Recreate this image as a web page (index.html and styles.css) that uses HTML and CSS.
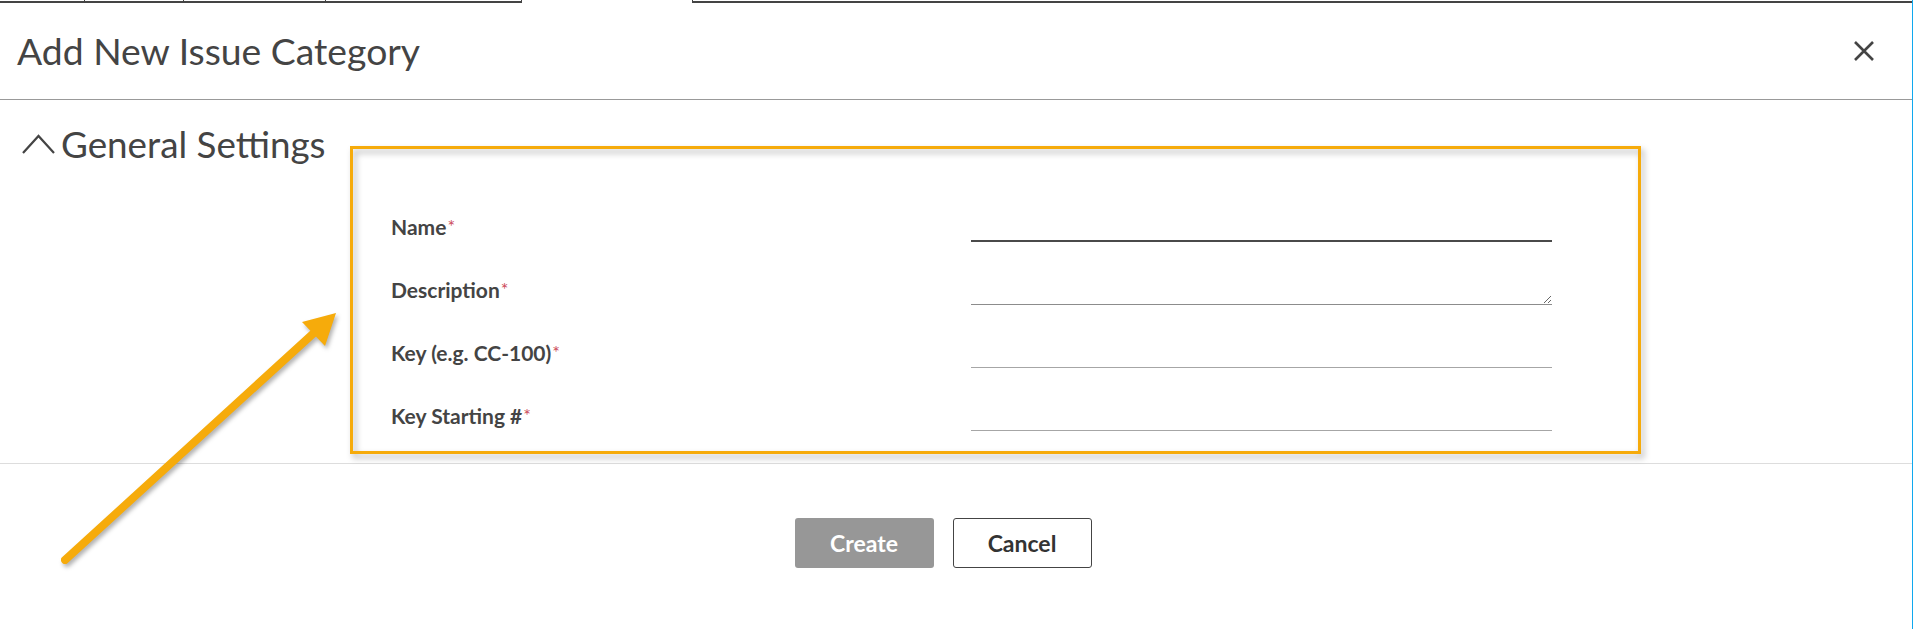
FILE: index.html
```html
<!DOCTYPE html>
<html lang="en">
<head>
<meta charset="utf-8">
<title>Add New Issue Category</title>
<link rel="stylesheet" href="styles.css">
</head>
<body>
<div class="page">
  <div class="topstrip">
    <div class="cell c1"></div>
    <div class="cell c2"></div>
    <div class="cell c3"></div>
    <div class="cell c4"></div>
    <div class="gap"></div>
    <div class="cell rest"></div>
  </div>

  <header class="header">
    <h1 class="title">Add New Issue Category</h1>
    <button class="close" aria-label="Close">
      <svg viewBox="0 0 22 22" width="22" height="22"><path d="M2 2 L20 20 M20 2 L2 20" stroke="#444" stroke-width="2.6" fill="none"/></svg>
    </button>
  </header>

  <main class="body">
    <div class="section-head">
      <svg class="chev" viewBox="0 0 33 20" width="33" height="20"><polyline points="1,19 16.5,2 32,19" fill="none" stroke="#444" stroke-width="2.2"/></svg>
      <span>General Settings</span>
    </div>
    <form class="form">
      <label class="lbl">Name<span class="req">*</span></label>
      <input class="field focused" type="text">
      <label class="lbl">Description<span class="req">*</span></label>
      <textarea class="field area"></textarea>
      <label class="lbl">Key (e.g. CC-100)<span class="req">*</span></label>
      <input class="field" type="text">
      <label class="lbl">Key Starting #<span class="req">*</span></label>
      <input class="field" type="text">
    </form>
  </main>

  <footer class="footer">
    <button class="btn primary">Create</button>
    <button class="btn secondary">Cancel</button>
  </footer>

  <div class="highlight"></div>
  <svg class="arrow" viewBox="0 0 320 300" width="320" height="300">
    <path d="M25 270 L276 41" stroke="#f6ab0b" stroke-width="8" stroke-linecap="round" fill="none"/>
    <polygon points="296,23 262,32 285,56" fill="#f6ab0b"/>
  </svg>
</div>
</body>
</html>
```
FILE: styles.css
```css
* { box-sizing: border-box; }
html, body { margin: 0; padding: 0; }
body {
  width: 1913px;
  height: 629px;
  overflow: hidden;
  background: #fff;
  font-family: Lato, "Open Sans", sans-serif;
  color: #444;
}
.page {
  position: relative;
  width: 1913px;
  height: 629px;
  border-right: 1px solid #10a8ee;
  display: flex;
  flex-direction: column;
}
.topstrip {
  display: flex;
  height: 3px;
  flex: none;
}
.cell {
  height: 3px;
  border-bottom: 2px solid #444;
  border-right: 1px solid #444;
}
.c1 { width: 85px; }
.c2 { width: 99px; }
.c3 { width: 142px; }
.c4 { width: 196px; }
.gap { width: 170px; }
.rest { flex: 1; border-right: none; border-left: 1px solid #444; }

.header {
  height: 97px;
  flex: none;
  display: flex;
  align-items: center;
  justify-content: space-between;
  padding: 0 37px 0 17px;
  border-bottom: 1px solid #999;
}
.title {
  margin: 0;
  font-size: 37.3px;
  line-height: 46px;
  font-weight: 400;
  color: #444;
}
.close {
  border: none;
  background: none;
  padding: 0;
  width: 22px;
  height: 22px;
  display: flex;
}

.body {
  height: 364px;
  flex: none;
  display: flex;
  border-bottom: 1px solid #ddd;
}
.section-head {
  width: 391px;
  flex: none;
  display: flex;
  align-items: center;
  align-self: flex-start;
  padding: 21px 0 0 22px;
  font-size: 36.8px;
  line-height: 46px;
  color: #444;
}
.chev { margin-right: 6px; }

.form {
  flex: none;
  width: 1161px;
  padding-top: 112px;
  display: grid;
  grid-template-columns: 580px 581px;
  grid-auto-rows: 30px;
  row-gap: 33px;
  margin: 0;
}
.lbl {
  font-size: 21px;
  line-height: 30px;
  font-weight: 700;
  color: #444;
}
.req {
  color: #cc4b5a;
  font-size: 18px;
  line-height: 0;
  vertical-align: 2px;
  font-weight: 400;
  margin-left: 1px;
}
.field {
  border: none;
  border-bottom: 1px solid #a6a6a6;
  background: #fff;
  height: 30px;
  width: 581px;
  padding: 0;
  font-family: Lato, sans-serif;
  font-size: 20px;
  outline: none;
  border-radius: 0;
}
.focused { border-bottom: 2px solid #4a4a4a; }
.area { border-bottom-color: #8c8c8c; resize: vertical; }

.footer {
  flex: 1;
  display: flex;
  justify-content: center;
  align-items: flex-start;
  gap: 19px;
  padding: 54px 26px 0 0;
}
.btn {
  width: 139px;
  height: 50px;
  border-radius: 3px;
  font-family: Lato, sans-serif;
  font-size: 23px;
  font-weight: 700;
  padding: 0;
}
.primary { background: #979797; color: #fff; border: none; }
.secondary { background: #fff; color: #333; border: 1px solid #444; }

.highlight {
  position: absolute;
  left: 350px;
  top: 146px;
  width: 1291px;
  height: 308px;
  border: 3px solid #f6ab0b;
  filter: drop-shadow(3px 4px 3px rgba(0,0,0,0.3));
  pointer-events: none;
}
.arrow {
  position: absolute;
  left: 40px;
  top: 290px;
  filter: drop-shadow(2px 3px 2px rgba(0,0,0,0.3));
  pointer-events: none;
}
```
